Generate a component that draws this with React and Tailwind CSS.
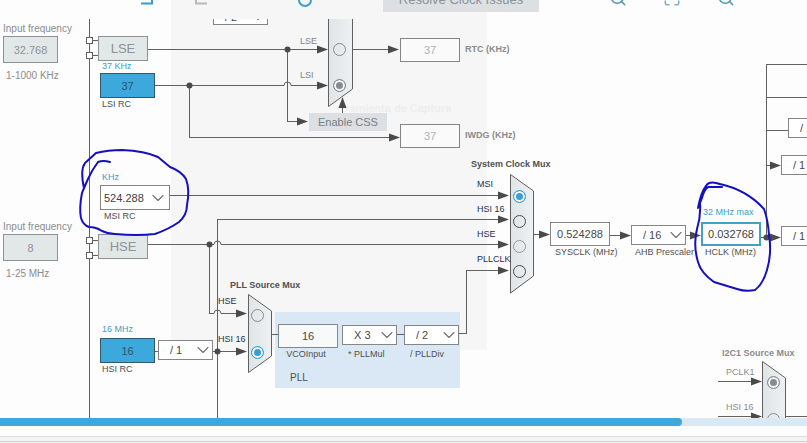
import { ChevronDown, Maximize, Search } from "lucide-react";

const Choice = ({ id, value, className = "", label }) => (
  <span className={`relative block ${className}`}>
    <select
      id={id}
      aria-label={label}
      defaultValue={value}
      className="block h-full w-full appearance-none border border-[#858585] bg-white pl-[11px] text-[11px] text-[#484848] outline-none"
    >
      <option>{value}</option>
    </select>
    <ChevronDown
      size={20}
      strokeWidth={1.3}
      className="pointer-events-none absolute right-0 top-1/2 -translate-y-1/2 text-[#707070]"
    />
  </span>
);

const Radio = ({ name, label, tone = "", checked = false }) => (
  <input
    type="radio"
    name={name}
    aria-label={label}
    defaultChecked={checked}
    className={`block h-[13px] w-[13px] appearance-none rounded-full border bg-transparent checked:shadow-[inset_0_0_0_2px_#f4f7f8] ${tone}`}
  />
);

const boxInput = "block border px-0 text-center text-[11px] outline-none";
const grayBox = "border-[#8d9293] bg-[#e2e7e8] text-[#8b9498]";
const blueBox = "border-[#35576a] bg-[#3da8dc] text-[#27556d]";

const grayRadio = "border-[#858b8e] checked:bg-[#858b8e]";
const darkRadio = "border-[#4b4b4b]";
const blueRadio = "border-[#3a9fd0] checked:bg-[#3a9fd0]";

const ArrowRight = ({ x, y }) => (
  <path d={`M${x} ${y}l-11 -4v8z`} fill="#4a4a4a" stroke="none" />
);

const arrows = [
  [328, 49],
  [328, 85],
  [308, 121],
  [399, 49],
  [400, 137],
  [509, 195],
  [509, 219],
  [509, 244],
  [509, 270],
  [247, 313],
  [247, 351],
  [550, 234],
  [631, 235],
  [701, 235],
  [781, 165],
  [781, 237],
  [762, 381],
  [762, 416],
];

const junctions = [
  [287, 49],
  [189, 85],
  [209, 244],
  [217, 351],
  [766, 237],
];

const Wires = () => (
  <svg className="pointer-events-none absolute inset-0 h-full w-full" aria-hidden="true">
    <defs>
      <linearGradient id="mux" x1="0" x2="1" y1="0" y2="0">
        <stop offset="0" stopColor="#dfe4e6" />
        <stop offset="1" stopColor="#eef1f2" />
      </linearGradient>
    </defs>
    <g transform="translate(0 -19)" fill="none" stroke="#606060">
      <g shapeRendering="crispEdges">
        <path d="M89.5 19V418M89 40.5H98M89 55.5H98M89 240.5H98M89 255.5H98" />
        <path d="M148 49.5H320M352 49.5H390M287.5 49V121.5H300" />
        <path d="M155 85.5H284M291 85.5H320M189.5 85V137.5H392" />
        <path d="M170 195.5H500M217.5 418V219.5H500" />
        <path d="M148 244.5H214M221 244.5H500M209.5 244V313.5H214M221 313.5H240" />
        <path d="M155 351.5H158M213 351.5H240M271 334.5H278M397 334.5H404" />
        <path d="M459 333.5H466.5V270.5H500" />
        <path d="M533 234.5H542M610 235.5H622M686 235.5H692M761 237.5H772" />
        <path d="M766.5 237V64.5H2000M766 97.5H2000M766 130.5H788M766 165.5H772" />
        <path d="M718 381.5H752M718 416.5H752M785 416.5H2000M342.5 113V105" />
        <g fill="#fff">
          <rect x="86.500" y="37.500" width="6" height="6" />
          <rect x="86.500" y="52.500" width="6" height="6" />
          <rect x="86.500" y="237.500" width="6" height="6" />
          <rect x="86.500" y="252.500" width="6" height="6" />
        </g>
      </g>
      <path d="M284 85.500a3.500 3.500 0 0 1 7 0M214 244.500a3.500 3.500 0 0 1 7 0M214 313.500a3.500 3.500 0 0 1 7 0" />
      <g fill="url(#mux)">
        <path d="M328.500 10V106.500L352.500 89V10" />
        <path d="M510.500 174.500L533.500 191V276L510.500 293Z" />
        <path d="M248.500 294.500L271.500 311V356L248.500 372.500Z" />
        <path d="M762.500 430V361.500L785.500 378V430" />
      </g>
      <path d="M342.500 97l-4 11h8z" fill="#4a4a4a" stroke="none" />
      {arrows.map(([x, y]) => (
        <ArrowRight key={`${x}-${y}`} x={x} y={y + 0.5} />
      ))}
      {junctions.map(([x, y]) => (
        <circle key={`${x}-${y}`} cx={x + 0.5} cy={y + 0.5} r="3" fill="#4a4a4a" stroke="none" />
      ))}
    </g>
  </svg>
);

const PenMarks = () => (
  <svg className="pointer-events-none absolute inset-0 h-full w-full" aria-hidden="true">
    <g
      transform="translate(0 -19)"
      fill="none"
      stroke="#1410c0"
      strokeWidth="2"
      strokeLinecap="round"
      strokeLinejoin="round"
    >
      <path d="M110 162Q103 160 98 162Q92 170 88 179Q84 188 82 193Q79 208 81 218Q83 225 89 227Q96 227 102 231Q108 234 115 234Q137 236 155 234Q169 229 179 222Q187 215 187 205Q190 190 186 179Q181 171 170 167L158 157Q145 151 122 150Q108 150 96 153L85 163Q80 170 84 188" />
      <path d="M722 187H708Q704 190 702 198L698 208Q701 192 706 186Q709 180 720 184Q747 190 764 209Q768 220 769 235Q772 253 767 270Q763 284 755 290Q746 292 737 289L714 282Q701 273 698 262Q693 245 697 229Q701 216 700 203Q700 193 707 188" />
    </g>
  </svg>
);

const Toolbar = () => (
  <header className="flex h-[19px] shrink-0 items-end overflow-hidden pb-[7px] pl-[137px]">
    <button type="button" aria-label="Undo" className="mb-[7px] h-5 w-[17px] shrink-0">
      <svg width="17" height="20" fill="none" stroke="#3a9fc8" strokeWidth="2">
        <path d="M4 18.500H15V9H4M8 5L4 9L8 13" />
      </svg>
    </button>
    <button type="button" aria-label="Redo" className="mb-[7px] ml-10 h-5 w-[17px] shrink-0">
      <svg width="17" height="20" fill="none" stroke="#b9b9b9" strokeWidth="2">
        <path d="M13 18.500H2V9H13M9 5L13 9L9 13" />
      </svg>
    </button>
    <button type="button" aria-label="Reset" className="mb-[5px] ml-[87px] h-[14px] w-[14px] shrink-0">
      <svg width="14" height="14" fill="none" stroke="#3f9fc9" strokeWidth="2">
        <circle cx="7" cy="7" r="6" />
      </svg>
    </button>
    <button
      type="button"
      className="ml-[71px] h-6 w-[156px] shrink-0 whitespace-nowrap bg-[#dce0e2] text-[13px] text-[#8b9499]"
    >
      Resolve Clock Issues
    </button>
    <div className="mb-[5px] ml-[70px] flex shrink-0 items-end gap-9">
      <button type="button" aria-label="Zoom in" className="text-[#4a97b6]">
        <Search size={18} strokeWidth={2} />
      </button>
      <button type="button" aria-label="Fit" className="text-[#7fb4c8]">
        <Maximize size={18} strokeWidth={2} />
      </button>
      <button type="button" aria-label="Zoom out" className="text-[#4a97b6]">
        <Search size={18} strokeWidth={2} />
      </button>
    </div>
  </header>
);

const ExternalInputs = () => (
  <div className="absolute left-[3px] top-1 flex flex-col gap-[139px] text-[10px] text-[#8c8c8c]">
    <div className="flex flex-col items-start">
      <label htmlFor="lse-in" className="mb-px whitespace-nowrap">Input frequency</label>
      <input id="lse-in" defaultValue="32.768" className={`${boxInput} ${grayBox} h-[27px] w-[55px]`} />
      <span className="ml-[3px] mt-[7px] whitespace-nowrap">1-1000 KHz</span>
    </div>
    <div className="flex flex-col items-start">
      <label htmlFor="hse-in" className="mb-px whitespace-nowrap">Input frequency</label>
      <input id="hse-in" defaultValue="8" className={`${boxInput} ${grayBox} h-[27px] w-[55px]`} />
      <span className="ml-[3px] mt-[7px] whitespace-nowrap">1-25 MHz</span>
    </div>
  </div>
);

const PllPanel = () => (
  <div className="absolute left-[275px] top-[293px] flex h-[76px] w-[185px] flex-col bg-[#d9e8f4] pl-[3px] pt-3">
    <div className="flex items-start">
      <div className="flex flex-col items-center">
        <input id="vco" defaultValue="16" className={`${boxInput} h-6 w-[60px] border-[#7d8a94] bg-[#f8f9f9] text-[#484848]`} />
        <label htmlFor="vco" className="pr-1">VCOInput</label>
      </div>
      <div className="ml-1 mt-px flex flex-col items-start">
        <Choice id="mul" value="X 3" className="h-5 w-[55px]" />
        <label htmlFor="mul" className="ml-1.5 mt-[3px]">* PLLMul</label>
      </div>
      <div className="ml-[7px] mt-px flex flex-col items-start">
        <Choice id="div" value="/ 2" className="h-5 w-[55px]" />
        <label htmlFor="div" className="ml-1.5 mt-[3px]">/ PLLDiv</label>
      </div>
    </div>
    <span className="ml-3 mt-3 text-[10px]">PLL</span>
  </div>
);

const ClockOutputs = () => (
  <div className="absolute left-[550px] top-[187px] flex items-end">
    <div className="flex w-[60px] flex-col items-start">
      <input id="sysclk" defaultValue="0.524288" className={`${boxInput} h-6 w-[60px] border-[#858585] bg-white text-[#484848]`} />
      <label htmlFor="sysclk" className="ml-[5px] whitespace-nowrap">SYSCLK (MHz)</label>
    </div>
    <div className="ml-[21px] flex w-[55px] flex-col items-start">
      <Choice id="ahb" value="/ 16" className="h-5 w-[55px]" />
      <label htmlFor="ahb" className="ml-1 mt-px whitespace-nowrap">AHB Prescaler</label>
    </div>
    <div className="ml-[15px] flex flex-col items-start">
      <span className="mb-1 ml-0.5 whitespace-nowrap text-[#3a9fc8]">32 MHz max</span>
      <input id="hclk" defaultValue="0.032768" className="block h-6 w-[60px] border-2 border-[#42a1c7] bg-white text-center text-[11px] text-[#404040] outline-none" />
      <label htmlFor="hclk" className="ml-1 whitespace-nowrap">HCLK (MHz)</label>
    </div>
  </div>
);

const App = () => {
  return (
    <div className="flex min-h-screen flex-col overflow-hidden bg-[#fdfdfd] font-['Liberation_Sans',Arial,sans-serif] text-[9px] leading-3 text-[#505050]">
      <div className="relative isolate flex flex-1 flex-col">
        {/* faint leftover of another window showing through */}
        <div className="absolute left-[171px] top-0 -z-10 h-[350px] w-[316px] bg-[#f6f6f6] pl-[174px] pt-[102px] text-[11px] font-bold text-[#eeeeee]">
          ramienta de Captura
        </div>
        <Toolbar />
        <main className="relative min-h-[399px] flex-1 overflow-hidden">
          <PllPanel />
          <Wires />
          <ExternalInputs />

          {/* oscillators */}
          <div className="absolute left-[98px] top-[17px] flex flex-col gap-[173px] text-[13px]">
            <button type="button" className={`h-[25px] w-[50px] border ${grayBox}`}>LSE</button>
            <button type="button" className={`h-[25px] w-[50px] border ${grayBox}`}>HSE</button>
          </div>
          <div className="absolute left-[100px] top-[41px] flex flex-col items-start">
            <label htmlFor="lsi" className="mb-px ml-0.5 text-[#3a9fc8]">37 KHz</label>
            <input id="lsi" defaultValue="37" className={`${boxInput} ${blueBox} h-[25px] w-[55px]`} />
            <span className="ml-0.5">LSI RC</span>
          </div>
          <div className="absolute left-[100px] top-[152px] flex flex-col items-start">
            <label htmlFor="msi" className="mb-0.5 ml-0.5 text-[#3a9fc8]">KHz</label>
            <span className="relative block h-[25px] w-[70px]">
              <select id="msi" defaultValue="524.288" className="block h-full w-full appearance-none border border-[#858585] bg-white pl-[3px] text-[11px] text-[#404040] outline-none">
                <option>524.288</option>
              </select>
              <ChevronDown size={20} strokeWidth={1.3} className="pointer-events-none absolute right-0.5 top-1/2 -translate-y-1/2 text-[#707070]" />
            </span>
            <span className="ml-1">MSI RC</span>
          </div>
          <div className="absolute left-[100px] top-[304px] flex items-start gap-[3px]">
            <div className="flex flex-col items-start">
              <label htmlFor="hsi" className="mb-[3px] ml-0.5 text-[#3a9fc8]">16 MHz</label>
              <input id="hsi" defaultValue="16" className={`${boxInput} ${blueBox} h-[25px] w-[55px]`} />
              <span className="ml-0.5">HSI RC</span>
            </div>
            <Choice value="/ 1" label="HSI divider" className="mt-[17px] h-5 w-[55px]" />
          </div>
          {/* scrolled partly out of view */}
          <div className="absolute left-[213px] top-[-10px]">
            <Choice value="/ 2" label="HSE RTC divider" className="h-4 w-[55px]" />
          </div>

          {/* RTC and watchdog */}
          <div className="absolute left-[300px] top-4 flex flex-col gap-[22px] text-[#858585]">
            <span>LSE</span>
            <span>LSI</span>
          </div>
          <div className="absolute left-[333px] top-6 flex flex-col gap-[23px]">
            <Radio name="rtc" label="LSE" tone={grayRadio} />
            <Radio name="rtc" label="LSI" tone={grayRadio} checked />
          </div>
          <button type="button" className="absolute left-[309px] top-[94px] h-[18px] w-[78px] bg-[#dce0e2] text-[11px] text-[#777f84]">Enable CSS</button>
          <div className="absolute left-[400px] top-[19px] flex flex-col gap-[62px]">
            <div className="flex items-center gap-[5px]">
              <input id="rtc" defaultValue="37" className={`${boxInput} h-6 w-[60px] border-[#858585] bg-[#fafafa] text-[#a6b5bb]`} />
              <label htmlFor="rtc" className="pb-[3px] font-bold text-[#8b8b8b]">RTC (KHz)</label>
            </div>
            <div className="flex items-center gap-[5px]">
              <input id="iwdg" defaultValue="37" className={`${boxInput} h-6 w-[60px] border-[#858585] bg-[#fafafa] text-[#a6b5bb]`} />
              <label htmlFor="iwdg" className="pb-[3px] font-bold text-[#8b8b8b]">IWDG (KHz)</label>
            </div>
          </div>

          {/* system clock mux */}
          <div className="absolute left-[471px] top-[139px] flex flex-col whitespace-nowrap">
            <span className="font-bold">System Clock Mux</span>
            <div className="mt-2 flex flex-col gap-[13px] pl-1.5 text-[#1d304c]">
              <span>MSI</span>
              <span>HSI 16</span>
              <span>HSE</span>
              <span>PLLCLK</span>
            </div>
          </div>
          <div className="absolute left-[513px] top-[171px] flex flex-col gap-3">
            <Radio name="sys" label="MSI" tone={blueRadio} checked />
            <Radio name="sys" label="HSI 16" tone={darkRadio} />
            <Radio name="sys" label="HSE" tone="border-[#999]" />
            <Radio name="sys" label="PLLCLK" tone={darkRadio} />
          </div>

          <ClockOutputs />

          {/* bus prescalers */}
          <div className="absolute left-[781px] top-[99px] flex flex-col">
            <Choice value="/ 1" label="Cortex timer divider" className="ml-[7px] h-5 w-[55px]" />
            <Choice value="/ 1" label="APB1 divider" className="mt-[17px] h-5 w-[55px]" />
            <Choice value="/ 1" label="APB2 divider" className="mt-[51px] h-5 w-[55px]" />
          </div>

          {/* PLL source mux */}
          <div className="absolute left-[218px] top-[260px] flex flex-col whitespace-nowrap">
            <span className="pl-3 font-bold">PLL Source Mux</span>
            <div className="mt-1 flex flex-col gap-[26px] text-[#1d304c]">
              <span>HSE</span>
              <span>HSI 16</span>
            </div>
          </div>
          <div className="absolute left-[251px] top-[290px] flex flex-col gap-6">
            <Radio name="pll" label="HSE" tone={grayRadio} />
            <Radio name="pll" label="HSI 16" tone={blueRadio} checked />
          </div>

          {/* I2C1 */}
          <div className="absolute left-[722px] top-[328px] flex flex-col whitespace-nowrap text-[#8b8b8b]">
            <span className="font-bold">I2C1 Source Mux</span>
            <div className="mt-[7px] flex flex-col gap-[23px] pl-1">
              <span>PCLK1</span>
              <span>HSI 16</span>
            </div>
          </div>
          <div className="absolute left-[767px] top-[357px] flex flex-col gap-6">
            <Radio name="i2c" label="PCLK1" tone={grayRadio} checked />
            <Radio name="i2c" label="HSI 16" tone={grayRadio} />
          </div>

          <PenMarks />
        </main>
      </div>

      <div className="h-2 shrink-0 bg-[#d9e8f2]">
        <div className="h-full w-[84.5%] rounded-r-full bg-[#3da8dc]" />
      </div>
      <footer className="mt-[10px] h-[7px] shrink-0 border-t border-[#dcdcdc] bg-[#f2f2f2]">
        <div className="mt-1 border-t border-[#d4d4d4]" />
      </footer>
    </div>
  );
};

export default App;
